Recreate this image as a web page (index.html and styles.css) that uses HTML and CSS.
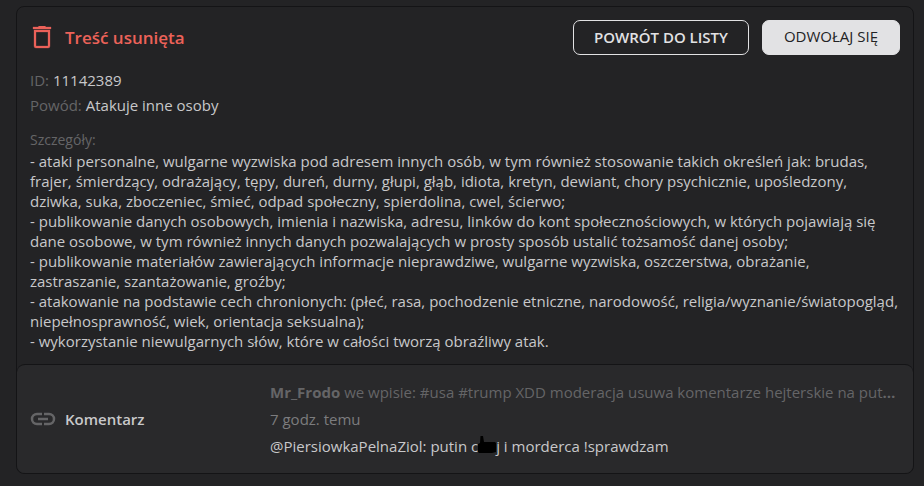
FILE: index.html
```html
<!DOCTYPE html>
<html lang="pl">
<head>
<meta charset="utf-8">
<meta name="viewport" content="width=device-width, initial-scale=1">
<title>Treść usunięta</title>
<link rel="stylesheet" href="styles.css">
</head>
<body>
<main class="card">
  <section class="report">
    <header class="report-header">
      <svg class="icon icon-trash" viewBox="0 0 24 24" aria-hidden="true">
        <path d="M3 1h5l1-1h6l1 1h5v2H3zM4 4h16v16a2 2 0 0 1-2 2H6a2 2 0 0 1-2-2zM6 6v14h12V6z" fill-rule="evenodd" stroke="#ec6259" stroke-width=".3"/>
      </svg>
      <h1 class="title">Treść usunięta</h1>
      <div class="actions">
        <button type="button" class="button button-outline">POWRÓT DO LISTY</button>
        <button type="button" class="button button-solid">ODWOŁAJ SIĘ</button>
      </div>
    </header>
    <dl class="facts">
      <div class="fact"><dt>ID:</dt> <dd>11142389</dd></div>
      <div class="fact"><dt>Powód:</dt> <dd>Atakuje inne osoby</dd></div>
    </dl>
    <h2 class="details-label">Szczegóły:</h2>
    <div class="details">
      <p>- ataki personalne, wulgarne wyzwiska pod adresem innych osób, w tym również stosowanie takich określeń jak: brudas, frajer, śmierdzący, odrażający, tępy, dureń, durny, głupi, głąb, idiota, kretyn, dewiant, chory psychicznie, upośledzony, dziwka, suka, zboczeniec, śmieć, odpad społeczny, spierdolina, cwel, ścierwo;</p>
      <p>- publikowanie danych osobowych, imienia i nazwiska, adresu, linków do kont społecznościowych, w których pojawiają się dane osobowe, w tym również innych danych pozwalających w prosty sposób ustalić tożsamość danej osoby;</p>
      <p>- publikowanie materiałów zawierających informacje nieprawdziwe, wulgarne wyzwiska, oszczerstwa, obrażanie, zastraszanie, szantażowanie, groźby;</p>
      <p>- atakowanie na podstawie cech chronionych: (płeć, rasa, pochodzenie etniczne, narodowość, religia/wyznanie/światopogląd, niepełnosprawność, wiek, orientacja seksualna);</p>
      <p>- wykorzystanie niewulgarnych słów, które w całości tworzą obraźliwy atak.</p>
    </div>
  </section>
  <section class="comment">
    <div class="kind">
      <svg class="icon icon-link" viewBox="0 0 26 14" aria-hidden="true">
        <path d="M12 2H7a5 5 0 0 0 0 10h5M14 2h5a5 5 0 0 1 0 10h-5M8 7h10" fill="none" stroke="currentColor" stroke-width="2.500"/>
      </svg>
      <h2 class="kind-name">Komentarz</h2>
    </div>
    <div class="comment-body">
      <p class="source"><strong>Mr_Frodo</strong> we wpisie: #usa #trump XDD moderacja usuwa komentarze hejterskie na put<strong>…</strong></p>
      <p class="time">7 godz. temu</p>
      <p class="text">@PiersiowkaPelnaZiol: putin c<svg class="redaction" viewBox="0 0 18 18" aria-hidden="true"><path d="M0 8 2 7 2.500 0 5 0 6 6 17 6 18 7V16L14 17 1 17 0 16Z"/></svg>j i morderca !sprawdzam</p>
    </div>
  </section>
</main>
</body>
</html>
```
FILE: styles.css
```css
* {
  box-sizing: border-box;
}

body {
  margin: 0;
  padding: 6px 10px 11px 16px;
  background: #232325;
  color: #c8c8ca;
  font: 15px/20px "Open Sans", "Noto Sans", sans-serif;
}

h1,
h2,
p,
dl,
dd {
  margin: 0;
}

.card {
  border: 1px solid #141416;
  border-radius: 8px;
}

.report {
  padding: 13px 13px 13px;
}

.report-header {
  display: flex;
  align-items: center;
}

.icon {
  flex: none;
}

.icon-trash {
  width: 24px;
  height: 24px;
  fill: #ec6259;
}

.title {
  margin-left: 11px;
  color: #ec6259;
  font-size: 17px;
  font-weight: 600;
  line-height: 24px;
}

.actions {
  display: flex;
  gap: 13px;
  margin-left: auto;
}

.button {
  height: 35px;
  padding: 0 20px 2px;
  border: 1px solid #e2e2e4;
  border-radius: 7px;
  font: inherit;
}

.button-outline {
  background: transparent;
  color: #e2e2e4;
  font-weight: 600;
}

.button-solid {
  padding: 0 21px 3px;
  background: #e2e2e4;
  color: #232325;
}

.facts {
  margin-top: 13px;
}

.fact {
  line-height: 25px;
}

.fact dt,
.fact dd {
  display: inline;
}

.fact dt,
.details-label {
  color: #656567;
}

.details-label {
  margin: 12px 0 1px;
  font-size: 14px;
  font-weight: 400;
}

.comment {
  display: flex;
  align-items: center;
  padding: 14px 13px;
  border-top: 1px solid #141416;
  border-radius: 8px;
  background: #29292b;
}

.kind {
  display: flex;
  flex: 0 0 240px;
  align-items: center;
}

.icon-link {
  width: 26px;
  height: 14px;
  color: #656567;
}

.kind-name {
  margin-left: 9px;
  font-size: 15px;
  font-weight: 600;
}

.comment-body {
  flex: 1;
  min-width: 0;
  line-height: 27px;
}

.source {
  overflow: hidden;
  color: #656567;
  text-overflow: ellipsis;
  white-space: nowrap;
}

.time {
  color: #7c7c7e;
}

.text {
  line-height: 26px;
}

.redaction {
  width: 18px;
  height: 18px;
  overflow: visible;
  vertical-align: -2px;
}
```
